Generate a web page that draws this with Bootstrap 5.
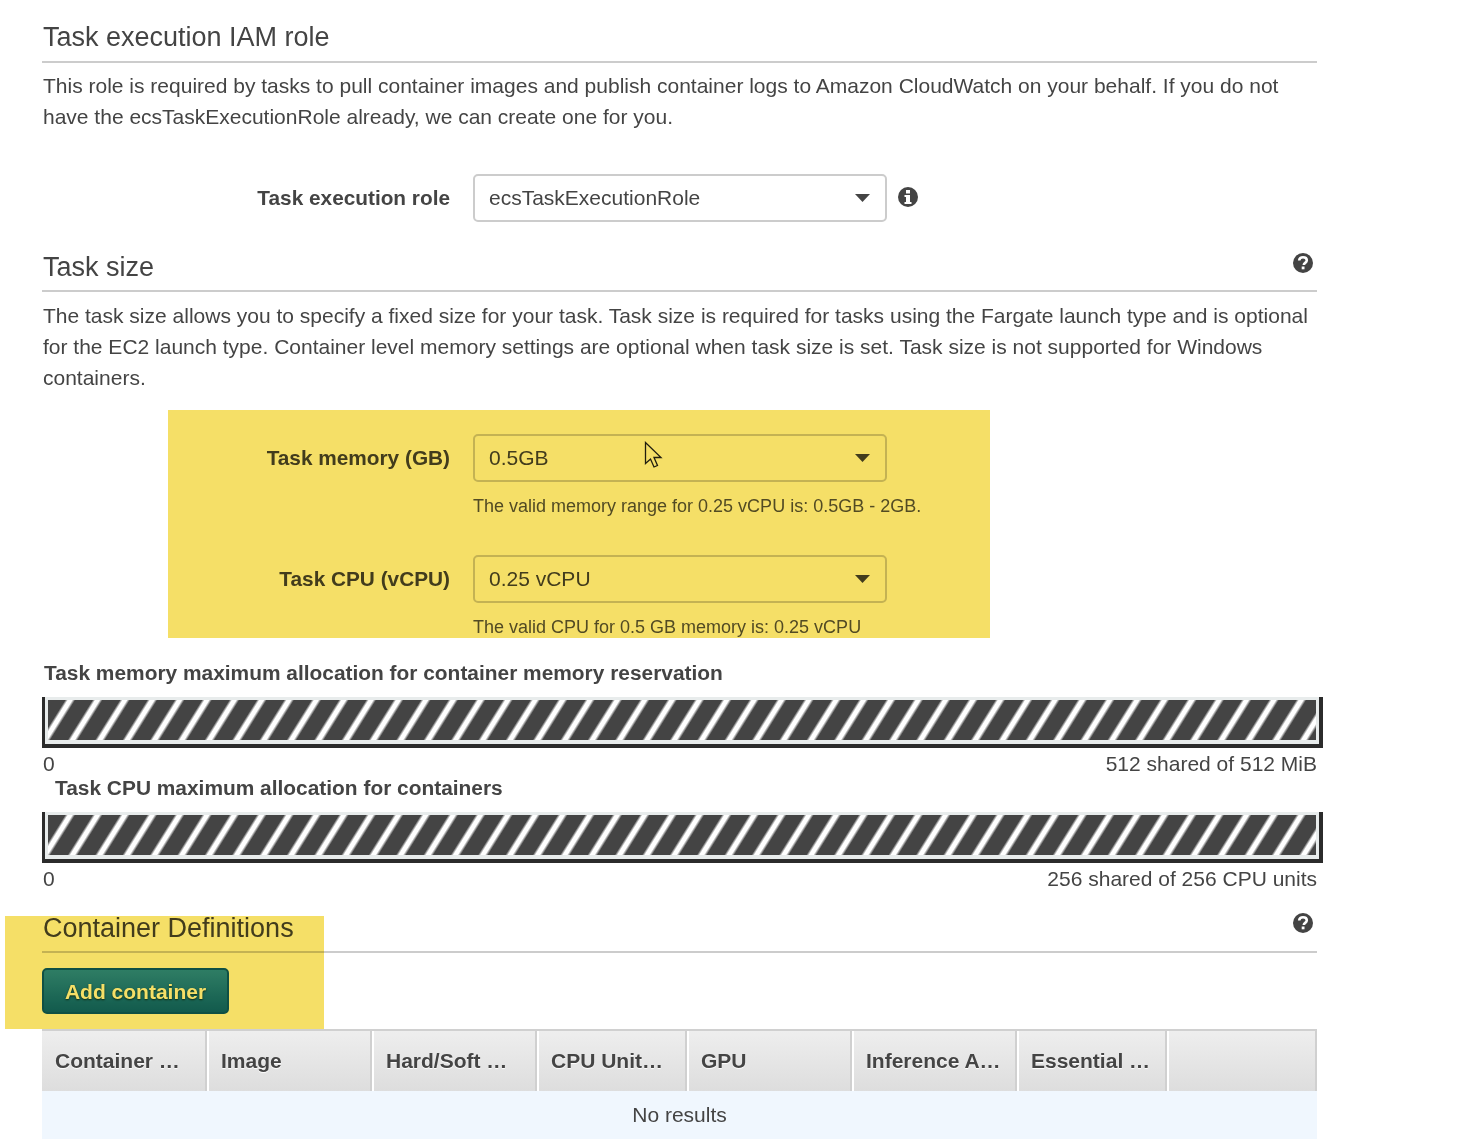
<!DOCTYPE html>
<html lang="en">

<head>
    <meta charset="UTF-8" />
    <meta name="viewport" content="width=device-width, initial-scale=1.0" />
    <title>Task definition</title>
    <link href="https://cdn.jsdelivr.net/npm/bootstrap@5.3.2/dist/css/bootstrap.min.css" rel="stylesheet" />
    <style>
        body {
            font-family: "Liberation Sans", Arial, sans-serif;
            font-size: 21px;
            line-height: 31px;
            color: #444;
            background: #fff;
            overflow: hidden;
        }

        .page-wrap {
            position: relative;
            width: 1275px;
            margin-left: 42px;
            padding-top: 18px;
        }

        .sec-head {
            display: flex;
            justify-content: space-between;
            align-items: flex-start;
            height: 45px;
            border-bottom: 2px solid #ccc;
            font-size: 27px;
            line-height: 38px;
            padding-left: 1px;
            margin-bottom: 7px;
        }

        .sec-head svg {
            margin: 3px 3px 0 0;
        }

        .size-head {
            height: 44px;
            margin-top: 27px;
            margin-bottom: 8px;
        }

        .size-head svg {
            margin-top: 4px;
        }

        .defs-head {
            height: 44px;
            margin-top: 15px;
            margin-bottom: 0;
        }

        .sec-text {
            margin: 0;
            padding-left: 1px;
        }

        .form-line {
            display: flex;
            align-items: center;
            height: 46px;
        }

        .role-line {
            margin-top: 43px;
        }

        .cpu-line {
            margin-top: 34px;
        }

        .form-line label {
            width: 408px;
            text-align: right;
            font-size: 20.8px;
            font-weight: 700;
            margin-right: 23px;
            margin-bottom: 2px;
        }

        .role-select {
            flex-shrink: 0;
            width: 414px;
            height: 48px;
            border: 2px solid #ccc;
            border-radius: 5px;
            font-size: 21px;
            line-height: 28px;
            color: #444;
            padding: 7px 40px 7px 14px;
            background-image: url("data:image/svg+xml,%3Csvg xmlns='http://www.w3.org/2000/svg' width='15' height='8'%3E%3Cpath d='M0 0h15L7.500 8z' fill='%23444'/%3E%3C/svg%3E");
            background-size: 15px 8px;
            background-position: right 15px center;
        }

        .info-icon {
            margin-left: 10px;
            margin-top: -2px;
        }

        .help-note {
            margin: 10px 0 0 431px;
            font-size: 18px;
            line-height: 31px;
            color: #555;
        }

        .mem-zone {
            position: relative;
            padding-top: 25px;
            margin-top: 17px;
            height: 228px;
        }

        .bar-title {
            font-size: 20.9px;
            font-weight: 700;
            line-height: 24px;
            margin: 0;
        }

        .bar-mem {
            margin-top: 23px;
            padding-left: 2px;
        }

        .bar-cpu {
            margin-top: -3px;
            padding-left: 13px;
        }

        .stripe-bar {
            width: 1281px;
            height: 51px;
            margin-top: 12px;
            border-style: solid;
            border-color: #2b2b2b;
            border-width: 0 4px 4px 3px;
            background: #e8ecec;
            padding: 3px 3px 4px 3px;
        }

        .stripe-fill {
            height: 100%;
            background: repeating-linear-gradient(122deg, #444 0, #444 14.5px, #fff 17px, #fff 20.5px, #444 23.2px);
        }

        .bar-scale {
            display: flex;
            justify-content: space-between;
            line-height: 31px;
            padding-left: 1px;
        }

        .add-btn {
            display: block;
            width: 187px;
            height: 46px;
            margin-top: 15px;
            padding: 1px 0 0;
            border: 2px solid #105ba8;
            border-radius: 5px;
            background: linear-gradient(#308ff8, #1267bd);
            color: #fff;
            font-size: 21px;
            font-weight: 700;
            text-shadow: 0 1px 2px #0a2c25;
        }

        .defs-table {
            width: 1275px;
            margin: 15px 0 0;
            table-layout: fixed;
            border-collapse: separate;
            border-spacing: 0;
            border-top: 2px solid #d0d0d0;
        }

        .defs-table th {
            height: 60px;
            padding: 0 0 2px 13px;
            border: 0;
            border-right: 2px solid #d0d0d0;
            background: linear-gradient(#eee, #ddd);
            color: #444;
            font-weight: 700;
            text-shadow: 0 1px 1px #fff;
            white-space: nowrap;
            vertical-align: middle;
        }

        .defs-table th+th {
            border-left: 2px solid #fff;
            padding-left: 12px;
        }

        .defs-table td {
            height: 48px;
            padding: 0 0 2px;
            border: 0;
            text-align: center;
            vertical-align: middle;
            background: #f0f7fe;
            color: #444;
        }

        .hl-box {
            position: absolute;
            background: #f5df67;
            mix-blend-mode: multiply;
            pointer-events: none;
        }

        .hl-mem {
            left: 126px;
            top: 0;
            width: 822px;
            height: 228px;
        }

        .hl-defs {
            left: -37px;
            top: 916px;
            width: 319px;
            height: 113px;
        }

        .mouse-arrow {
            position: absolute;
            left: 602px;
            top: 31px;
        }
    </style>
</head>

<body>
    <div class="page-wrap">
        <div class="sec-head">Task execution IAM role</div>
        <p class="sec-text">This role is required by tasks to pull container images and publish container logs to Amazon CloudWatch on your behalf. If you do not have the ecsTaskExecutionRole already, we can create one for you.</p>

        <div class="form-line role-line">
            <label>Task execution role</label>
            <select class="form-select role-select">
                <option>ecsTaskExecutionRole</option>
            </select>
            <svg class="info-icon" width="22" height="22" viewBox="0 0 22 22">
                <circle cx="11" cy="11" r="10" fill="#444" />
                <rect x="9" y="4" width="4" height="3.500" fill="#fff" />
                <path d="M7.500 9h5.500v7h1.500v2h-7v-2h1.500v-5h-1.500z" fill="#fff" />
            </svg>
        </div>

        <div class="sec-head size-head">Task size
            <svg width="22" height="22" viewBox="0 0 22 22">
                <circle cx="11" cy="11" r="10" fill="#444" />
                <path d="M7.200 8.500c0-2.200 1.700-3.300 3.800-3.300s3.800 1.200 3.800 3.100c0 2.600-3 2.500-3 4.700" fill="none" stroke="#fff" stroke-width="2.600" />
                <rect x="9.700" y="14.500" width="2.800" height="2.800" fill="#fff" />
            </svg>
        </div>
        <p class="sec-text">The task size allows you to specify a fixed size for your task. Task size is required for tasks using the Fargate launch type and is optional for the EC2 launch type. Container level memory settings are optional when task size is set. Task size is not supported for Windows containers.</p>

        <div class="mem-zone">
            <div class="form-line">
                <label>Task memory (GB)</label>
                <select class="form-select role-select">
                    <option>0.5GB</option>
                </select>
            </div>
            <p class="help-note">The valid memory range for 0.25 vCPU is: 0.5GB - 2GB.</p>
            <div class="form-line cpu-line">
                <label>Task CPU (vCPU)</label>
                <select class="form-select role-select">
                    <option>0.25 vCPU</option>
                </select>
            </div>
            <p class="help-note">The valid CPU for 0.5 GB memory is: 0.25 vCPU</p>
            <svg class="mouse-arrow" width="20" height="28" viewBox="0 0 20 28">
                <path d="M1.500 1.500v21l5-4.500 3.500 8 3.500-1.500-3.500-8h7z" fill="#fff" stroke="#222" stroke-width="1.300" />
            </svg>
            <div class="hl-box hl-mem"></div>
        </div>

        <p class="bar-title bar-mem">Task memory maximum allocation for container memory reservation</p>
        <div class="stripe-bar">
            <div class="stripe-fill"></div>
        </div>
        <div class="bar-scale"><span>0</span><span>512 shared of 512 MiB</span></div>
        <p class="bar-title bar-cpu">Task CPU maximum allocation for containers</p>
        <div class="stripe-bar">
            <div class="stripe-fill"></div>
        </div>
        <div class="bar-scale"><span>0</span><span>256 shared of 256 CPU units</span></div>

        <div class="sec-head defs-head">Container Definitions
            <svg width="22" height="22" viewBox="0 0 22 22">
                <circle cx="11" cy="11" r="10" fill="#444" />
                <path d="M7.200 8.500c0-2.200 1.700-3.300 3.800-3.300s3.800 1.200 3.800 3.100c0 2.600-3 2.500-3 4.700" fill="none" stroke="#fff" stroke-width="2.600" />
                <rect x="9.700" y="14.500" width="2.800" height="2.800" fill="#fff" />
            </svg>
        </div>
        <button class="btn add-btn">Add container</button>

        <table class="table defs-table">
            <colgroup>
                <col style="width:165px">
                <col style="width:165px">
                <col style="width:165px">
                <col style="width:150px">
                <col style="width:165px">
                <col style="width:165px">
                <col style="width:150px">
                <col style="width:150px">
            </colgroup>
            <thead>
                <tr>
                    <th>Container …</th>
                    <th>Image</th>
                    <th>Hard/Soft …</th>
                    <th>CPU Unit…</th>
                    <th>GPU</th>
                    <th>Inference A…</th>
                    <th>Essential …</th>
                    <th></th>
                </tr>
            </thead>
            <tbody>
                <tr>
                    <td colspan="8">No results</td>
                </tr>
            </tbody>
        </table>

        <div class="hl-box hl-defs"></div>
    </div>

    <script src="https://cdn.jsdelivr.net/npm/bootstrap@5.3.2/dist/js/bootstrap.bundle.min.js"></script>
</body>

</html>
